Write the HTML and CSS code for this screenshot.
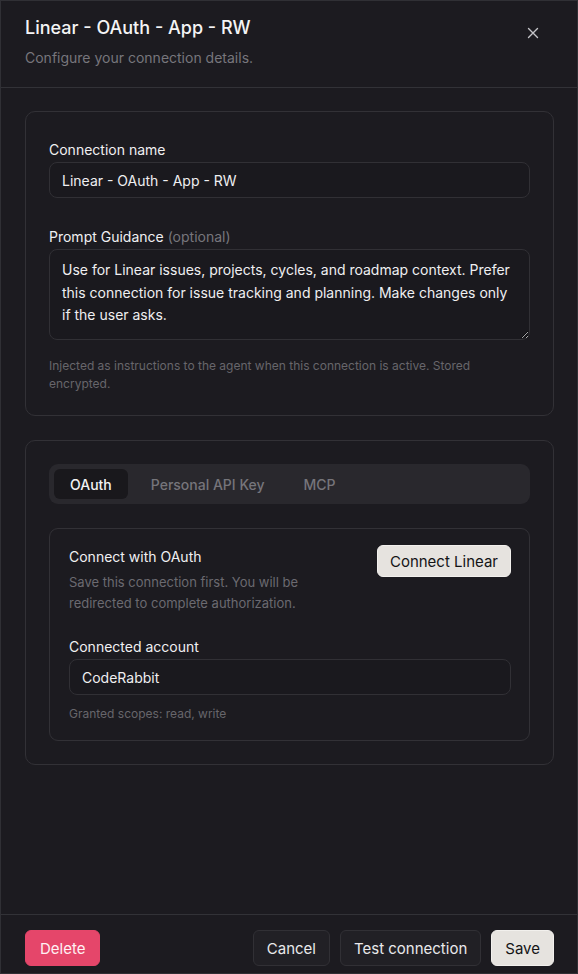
FILE: index.html
```html
<!DOCTYPE html>
<html>
<head>
    <title>Linear - OAuth - App - RW</title>
    <link rel="stylesheet" href="styles.css">
</head>
<body>
    <div class="dialog">
        <div class="dialog-header">
            <div>
                <h2 class="dialog-title">Linear - OAuth - App - RW</h2>
                <p class="dialog-desc">Configure your connection details.</p>
            </div>
            <button class="close-btn" aria-label="Close">
                <svg width="12" height="12" viewBox="0 0 12 12" fill="none" stroke="currentColor" stroke-width="1.4" stroke-linecap="round">
                    <path d="M1.5 1.5l9 9M10.5 1.5l-9 9"/>
                </svg>
            </button>
        </div>

        <div class="dialog-body">
            <div class="card">
                <div class="field">
                    <label class="label" for="conn-name">Connection name</label>
                    <input class="input" id="conn-name" type="text" value="Linear - OAuth - App - RW">
                </div>
                <div class="field">
                    <label class="label" for="guidance">Prompt Guidance <span class="muted">(optional)</span></label>
                    <textarea class="textarea" id="guidance">Use for Linear issues, projects, cycles, and roadmap context. Prefer this connection for issue tracking and planning. Make changes only if the user asks.</textarea>
                    <p class="hint">Injected as instructions to the agent when this connection is active. Stored encrypted.</p>
                </div>
            </div>

            <div class="card card-auth">
                <div class="tabs">
                    <button class="tab active">OAuth</button>
                    <button class="tab">Personal API Key</button>
                    <button class="tab">MCP</button>
                </div>

                <div class="panel">
                    <div class="panel-top">
                        <div>
                            <div class="panel-title">Connect with OAuth</div>
                            <p class="panel-desc">Save this connection first. You will be redirected to complete authorization.</p>
                        </div>
                        <button class="btn btn-light btn-connect">Connect Linear</button>
                    </div>
                    <div class="field">
                        <label class="label" for="account">Connected account</label>
                        <input class="input" id="account" type="text" value="CodeRabbit" readonly>
                        <p class="hint">Granted scopes: read, write</p>
                    </div>
                </div>
            </div>
        </div>

        <div class="dialog-footer">
            <button class="btn btn-danger">Delete</button>
            <div class="footer-right">
                <button class="btn btn-dark">Cancel</button>
                <button class="btn btn-dark">Test connection</button>
                <button class="btn btn-light">Save</button>
            </div>
        </div>
    </div>
</body>
</html>
```

FILE: styles.css
```css
* {
    box-sizing: border-box;
}

body {
    margin: 0;
    background-color: #1c1b20;
    font-family: Inter, "Noto Sans", Arial, sans-serif;
    color: #ececee;
}

.dialog {
    width: 578px;
    height: 974px;
    display: flex;
    flex-direction: column;
    background-color: #1c1b20;
    border: 1px solid #303035;
}

.dialog-header {
    display: flex;
    justify-content: space-between;
    align-items: flex-start;
    padding: 15px 24px 19px 24px;
    border-bottom: 1px solid #323237;
}

.dialog-title {
    margin: 0;
    font-size: 18px;
    line-height: 24px;
    font-weight: 500;
    color: #f4f4f5;
}

.dialog-desc {
    margin: 8px 0 0 0;
    font-size: 14px;
    line-height: 20px;
    color: #77767c;
}

.close-btn {
    background: none;
    border: none;
    padding: 0;
    margin: 11px 14px 0 0;
    color: #c4c4c8;
    cursor: pointer;
    display: flex;
}

.dialog-body {
    flex: 1;
    padding: 23px 23px 0 24px;
    display: flex;
    flex-direction: column;
    gap: 24px;
}

.card {
    border: 1px solid #323136;
    border-radius: 10px;
    padding: 28px 23px 22px 23px;
    display: flex;
    flex-direction: column;
    gap: 29px;
}

.card-auth {
    padding: 23px 23px 23px 23px;
    gap: 24px;
}

.field {
    display: flex;
    flex-direction: column;
}

.label {
    font-size: 14px;
    line-height: 20px;
    font-weight: 400;
    color: #f0f0f2;
    margin-bottom: 2px;
}

.muted {
    color: #77767c;
    font-weight: 400;
}

.input,
.textarea {
    width: 100%;
    background-color: #1a191e;
    border: 1px solid #313035;
    border-radius: 8px;
    color: #efeff1;
    font-family: inherit;
    font-size: 14px;
    padding: 0 12px;
    outline: none;
}

.input {
    height: 36px;
}

.textarea {
    height: 91px;
    padding: 9px 12px;
    line-height: 22.5px;
    resize: vertical;
}

.hint {
    margin: 17px 0 0 0;
    font-size: 12px;
    line-height: 18px;
    color: #67666b;
}

.tabs {
    display: flex;
    gap: 7px;
    padding: 5px;
    background-color: #29282d;
    border-radius: 9px;
}

.tab {
    height: 30px;
    padding: 0 16px;
    border: none;
    border-radius: 6px;
    background: none;
    font-family: inherit;
    font-size: 14px;
    font-weight: 500;
    color: #76757b;
    cursor: pointer;
}

.tab.active {
    background-color: #19181c;
    color: #f2f2f4;
}

.panel {
    border: 1px solid #323136;
    border-radius: 9px;
    padding: 18px 18px 17px 19px;
    display: flex;
    flex-direction: column;
    gap: 23px;
}

.panel-top {
    display: flex;
    justify-content: space-between;
    align-items: flex-start;
}

.panel-title {
    font-size: 14px;
    line-height: 20px;
    font-weight: 400;
    color: #f0f0f2;
}

.panel-desc {
    margin: 5px 0 0 0;
    width: 250px;
    font-size: 13px;
    line-height: 21px;
    color: #6b6a70;
}

.panel .hint {
    margin-top: 10px;
}

.btn {
    height: 36px;
    padding: 0 13px;
    border-radius: 6px;
    font-family: inherit;
    font-size: 15px;
    cursor: pointer;
    border: 1px solid transparent;
}

.btn-connect {
    height: 32px;
    padding: 0 12px;
    margin-top: -2px;
}

.btn-light {
    background-color: #e6e3df;
    color: #141416;
    border-color: #f2f0ed;
}

.btn-dark {
    background-color: #212025;
    color: #e9e9eb;
    border-color: #313035;
}

.btn-danger {
    background-color: #e5466a;
    color: #fff1f3;
    border-color: #e5466a;
    padding: 0 14px;
}

.dialog-footer {
    display: flex;
    justify-content: space-between;
    align-items: center;
    padding: 15px 23px 7px 24px;
    border-top: 1px solid #323237;
}

.footer-right {
    display: flex;
    gap: 10px;
}
```
